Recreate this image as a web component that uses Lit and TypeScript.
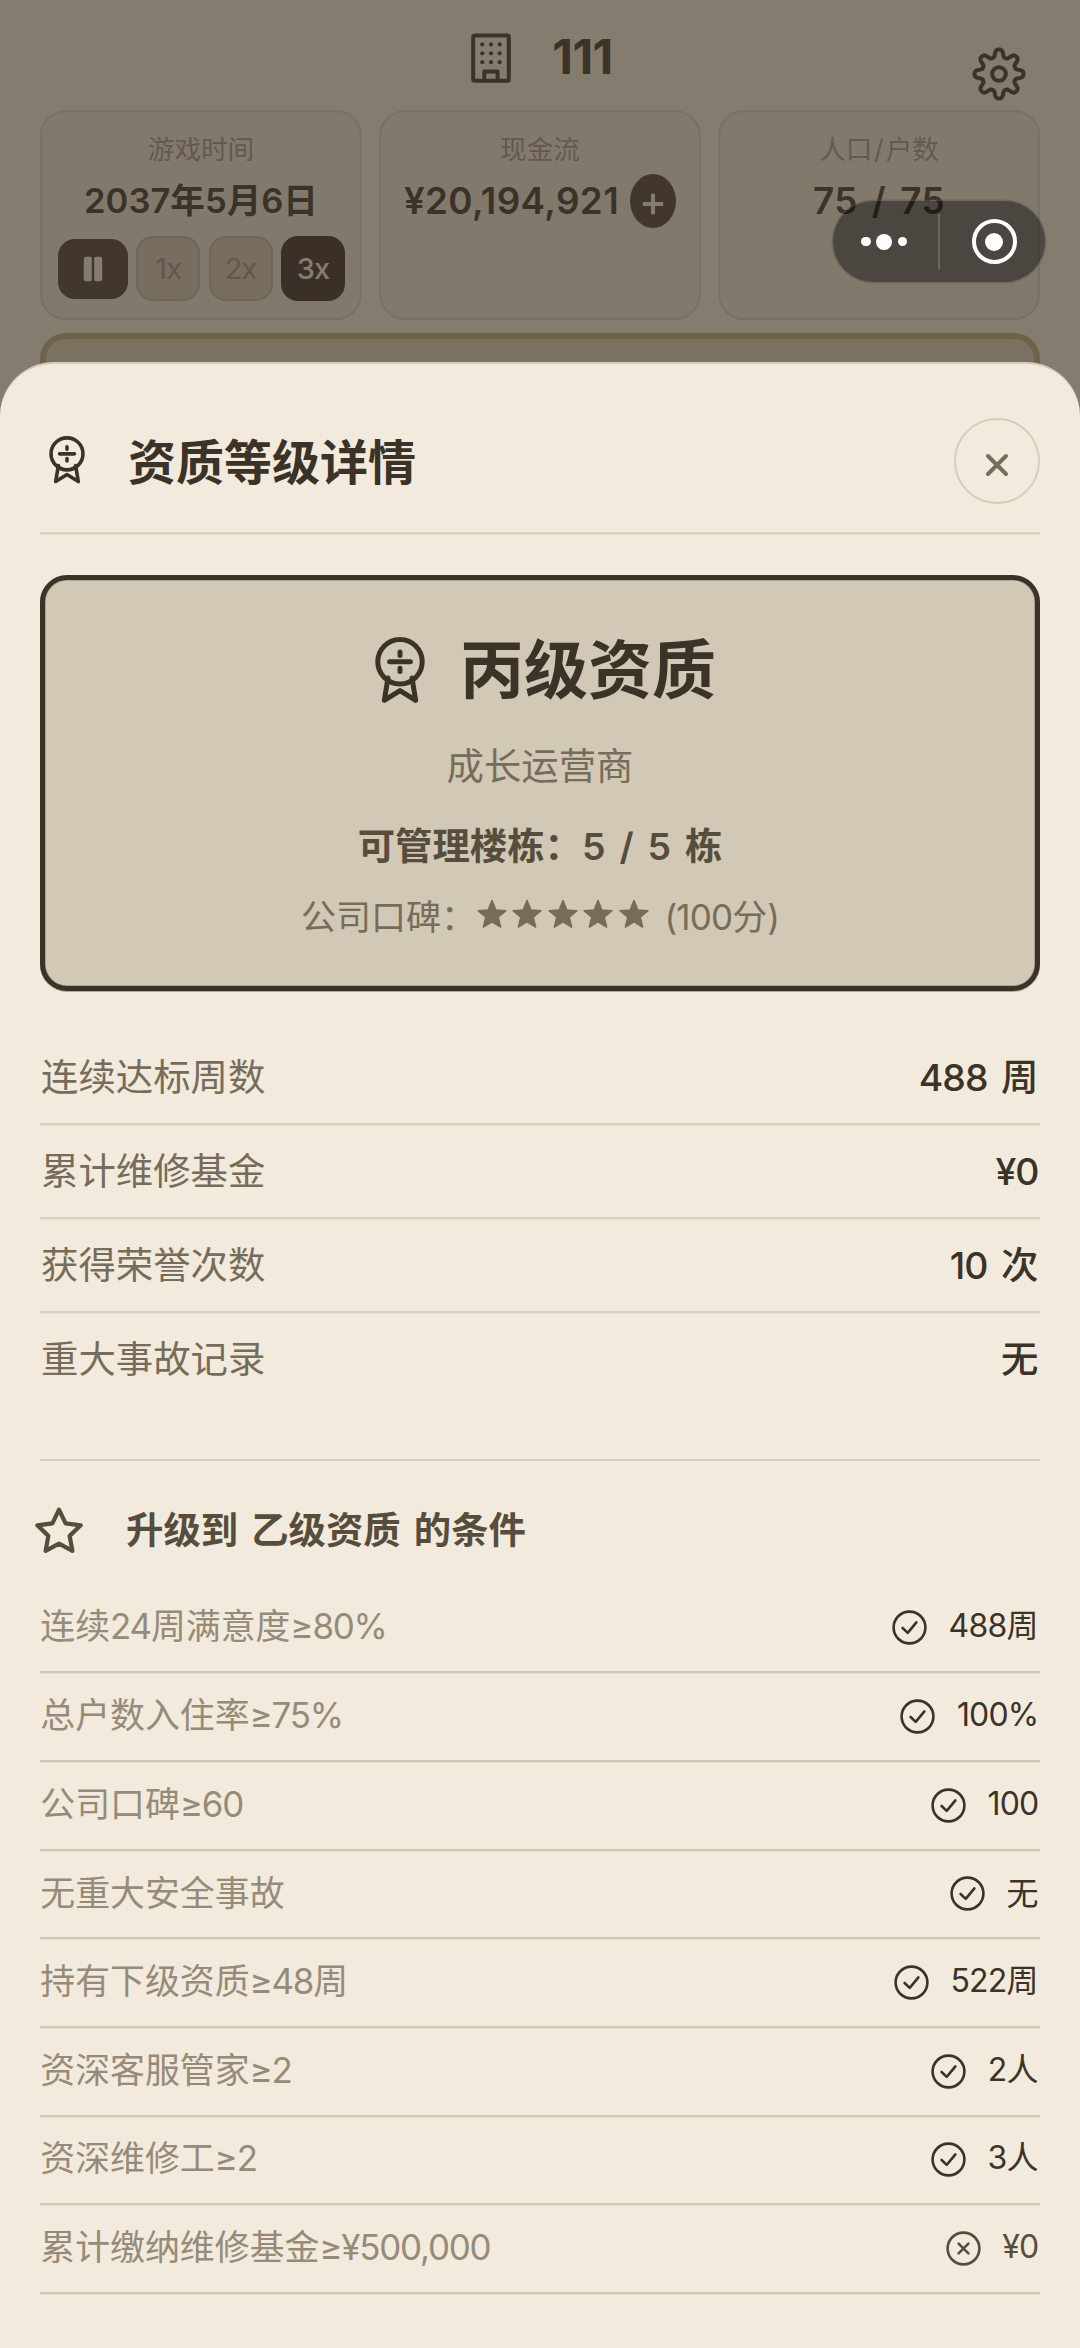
import { LitElement, html, svg, css } from "lit";
import { customElement, property } from "lit/decorators.js";

/** Splits a string into CJK and Latin runs so that each gets its own face. */
const mixed = (text: string) =>
  text
    .split(/([\x20-\x7e\u00a5\u2265]+)/)
    .filter((run) => run !== "")
    .map((run) => (/^[\x20-\x7e\u00a5\u2265]/.test(run) ? html`<span class="lat">${run}</span>` : run));

const starPoints = (cx: number, cy: number, outer: number, inner: number) =>
  Array.from({ length: 10 }, (_, i) => {
    const r = i % 2 ? inner : outer;
    const a = (i * Math.PI) / 5 - Math.PI / 2;
    return `${(cx + r * Math.cos(a)).toFixed(2)},${(cy + r * Math.sin(a)).toFixed(2)}`;
  }).join(" ");

const gearPoints = (c: number, mid: number, amp: number) =>
  Array.from({ length: 192 }, (_, i) => {
    const a = (i / 192) * Math.PI * 2;
    const r = mid + (amp * Math.tanh(1.5 * Math.cos(8 * a))) / Math.tanh(1.5);
    return `${(c + r * Math.cos(a)).toFixed(2)},${(c + r * Math.sin(a)).toFixed(2)}`;
  }).join(" ");

const ICONS = {
  medal: {
    box: "0 0 50 66",
    body: svg`<g fill="none" stroke="currentColor" stroke-width="5" stroke-linecap="round" stroke-linejoin="round">
      <circle cx="25" cy="24.8" r="22.2"/>
      <path d="M14.6 24.8H35.4"/>
      <path d="M13 41L9.3 63.3L25 53.6L40.7 63.3L37 41"/>
      <path d="M25 15V18.4M25 31.2V34.6"/></g>`,
  },
  building: {
    box: "0 0 40 50",
    body: svg`<g fill="none" stroke="currentColor" stroke-width="4" stroke-linejoin="round">
      <rect x="2.2" y="2.4" width="35.6" height="45.4" rx="1.6"/>
      <path d="M13.3 47V38.4H26.6V47"/></g>
      <g fill="currentColor">${[11.3, 20, 28.7].map((x) =>
        [11.4, 20.3, 29.2].map((y) => svg`<circle cx=${x} cy=${y} r="2.1"/>`)
      )}</g>`,
  },
  gear: {
    box: "0 0 54 54",
    body: svg`<g fill="none" stroke="currentColor" stroke-width="4" stroke-linejoin="round">
      <polygon points=${gearPoints(27, 20.8, 3.7)}/>
      <circle cx="27" cy="27" r="6.8"/></g>`,
  },
  plus: {
    box: "0 0 22 22",
    body: svg`<path d="M11 .8V21.2M.8 11H21.2" stroke="currentColor" stroke-width="4"/>`,
  },
  pause: {
    box: "0 0 20 26",
    body: svg`<g fill="currentColor"><rect x=".8" y=".8" width="8" height="24.4" rx="2"/><rect x="11.2" y=".8" width="8" height="24.4" rx="2"/></g>`,
  },
  close: {
    box: "0 0 24 24",
    body: svg`<path d="M3 3L21 21M21 3L3 21" stroke="currentColor" stroke-width="4" stroke-linecap="round"/>`,
  },
  star: {
    box: "0 0 50 50",
    body: svg`<polygon points=${starPoints(25, 26.4, 22.8, 11.2)} fill="none" stroke="currentColor" stroke-width="4.2" stroke-linejoin="round"/>`,
  },
  rate: {
    box: "0 0 30 30",
    body: svg`<polygon points=${starPoints(15, 16.2, 14.6, 6.5)} fill="currentColor" stroke="currentColor" stroke-width="1.6" stroke-linejoin="round"/>`,
  },
  check: {
    box: "0 0 35 35",
    body: svg`<g fill="none" stroke="currentColor" stroke-width="2.6" stroke-linecap="round" stroke-linejoin="round">
      <circle cx="17.5" cy="17.5" r="15.9"/><path d="M10.6 18L15.7 22.9L24.4 12.4"/></g>`,
  },
  cross: {
    box: "0 0 35 35",
    body: svg`<g fill="none" stroke="currentColor" stroke-width="2.6" stroke-linecap="round">
      <circle cx="17.5" cy="17.5" r="15.9"/><path d="M12.6 12.6L22.4 22.4M22.4 12.6L12.6 22.4"/></g>`,
  },
};

type IconName = keyof typeof ICONS;

@customElement("ui-icon")
class UiIcon extends LitElement {
  @property() name: IconName = "star";

  static styles = css`
    :host {
      display: block;
      flex: none;
    }
    svg {
      display: block;
      width: 100%;
      height: 100%;
    }
  `;

  render() {
    const icon = ICONS[this.name];
    return html`<svg viewBox=${icon.box}>${icon.body}</svg>`;
  }
}

const STATS = [
  ["连续达标周数", "488 周"],
  ["累计维修基金", "¥0"],
  ["获得荣誉次数", "10 次"],
  ["重大事故记录", "无"],
];

const CONDITIONS: { label: string; value: string; met: boolean }[] = [
  { label: "连续24周满意度≥80%", value: "488周", met: true },
  { label: "总户数入住率≥75%", value: "100%", met: true },
  { label: "公司口碑≥60", value: "100", met: true },
  { label: "无重大安全事故", value: "无", met: true },
  { label: "持有下级资质≥48周", value: "522周", met: true },
  { label: "资深客服管家≥2", value: "2人", met: true },
  { label: "资深维修工≥2", value: "3人", met: true },
  { label: "累计缴纳维修基金≥¥500,000", value: "¥0", met: false },
];

@customElement("app-root")
class AppRoot extends LitElement {
  static styles = css`
    :host {
      display: block;
      position: relative;
      box-sizing: border-box;
      width: 1080px;
      height: 2348px;
      overflow: hidden;
      background: #857c70;
      color: #3b3228;
      font-family: "Noto Sans CJK SC", sans-serif;
      white-space: nowrap;
    }
    * {
      box-sizing: border-box;
    }
    .lat {
      font-family: Inter, "Noto Sans CJK SC", sans-serif;
      letter-spacing: -0.025em;
      word-spacing: 0.12em;
      white-space: pre;
    }

    /* dimmed game screen */
    .game {
      display: flex;
      flex-direction: column;
      padding: 0 40px;
    }
    .topbar {
      display: grid;
      grid-template-columns: 1fr auto 1fr;
      align-items: center;
      height: 110px;
    }
    .brand {
      grid-column: 2;
      display: flex;
      align-items: center;
      gap: 41px;
      height: 118px;
      margin: -1px 0 0 4px;
      font-size: 48px;
      font-weight: 700;
    }
    .brand .lat {
      letter-spacing: -0.01em;
      margin-top: -3px;
    }
    .brand ui-icon {
      width: 40px;
      height: 50px;
    }
    .topbar .settings {
      justify-self: end;
      width: 54px;
      height: 54px;
      margin: 40px 14px 0 0;
      translate: 0 -5px;
    }
    .tiles {
      display: grid;
      grid-template-columns: repeat(3, 1fr);
      gap: 17px;
      height: 210px;
    }
    .tile {
      display: flex;
      flex-direction: column;
      align-items: center;
      padding: 18px 0 0;
      border: 2px solid #7a7164;
      border-radius: 26px;
      background: #82796d;
    }
    .tile-label {
      height: 36px;
      line-height: 36px;
      font-size: 26.6px;
      color: #635a4d;
    }
    .tile-label .lat {
      letter-spacing: 0.08em;
      margin-left: 0.06em;
    }
    .tile-value {
      display: flex;
      align-items: center;
      justify-content: center;
      height: 54px;
      margin-top: 8px;
      gap: 11px;
      font-size: 36.8px;
      line-height: 54px;
      font-weight: 600;
    }
    .tile-value .lat {
      letter-spacing: 0.01em;
      word-spacing: 0.12em;
    }
    .tile-value.date {
      font-size: 34.6px;
      margin-top: 6px;
    }
    .tile-value.date .lat {
      letter-spacing: 0;
    }
    .add {
      display: flex;
      align-items: center;
      justify-content: center;
      width: 46px;
      height: 54px;
      padding-top: 5px;
      border-radius: 50%;
      background: #41372a;
      color: #857c70;
    }
    .add ui-icon {
      width: 22px;
      height: 22px;
    }
    .speeds {
      display: flex;
      align-items: center;
      gap: 8.4px;
      margin: 10px 0 0 1px;
    }
    .speed {
      display: flex;
      align-items: center;
      justify-content: center;
      width: 64px;
      height: 65px;
      border: 2px solid #6f6658;
      border-radius: 17px;
      background: #776e60;
      color: #61584a;
      font-size: 29px;
    }
    .speed.pause {
      width: 70px;
      height: 60px;
      border-color: #41372a;
      background: #41372a;
      color: #857c70;
    }
    .speed.pause ui-icon {
      width: 20px;
      height: 26px;
    }
    .speed.on {
      border-color: #3a3027;
      background: #3a3027;
      color: #857c70;
      font-weight: 500;
    }
    .notice {
      height: 90px;
      margin-top: 12.5px;
      border: 6px solid #706149;
      border-radius: 26px;
      background: #7a7161;
    }

    /* host-app capsule floating over the page */
    .capsule {
      position: absolute;
      left: 833px;
      top: 201px;
      display: grid;
      grid-template-columns: 105px 2px 1fr;
      align-items: center;
      justify-items: center;
      width: 212px;
      height: 81px;
      border-radius: 41px;
      background: rgba(0, 0, 0, 0.42);
      box-shadow: 0 0 0 1.5px rgba(90, 82, 76, 0.45);
    }
    .dots {
      display: flex;
      align-items: center;
      gap: 5.5px;
      margin-right: 3px;
    }
    .dot {
      width: 9.4px;
      height: 9.4px;
      border-radius: 50%;
      background: #fff;
    }
    .dot.big {
      width: 16px;
      height: 16px;
    }
    .sep {
      width: 2px;
      height: 55px;
      background: #6d6761;
    }
    .ring {
      display: flex;
      align-items: center;
      justify-content: center;
      width: 45px;
      height: 45px;
      margin-left: 3px;
      border: 4.5px solid #fff;
      border-radius: 50%;
    }
    .ring .dot {
      width: 18px;
      height: 18px;
    }

    /* bottom sheet */
    .sheet {
      position: absolute;
      inset: 362px 0 0;
      display: flex;
      flex-direction: column;
      padding: 0 40px;
      border-top: 2px solid #d3cab8;
      border-radius: 54px 54px 0 0;
      background: #f2eadc;
    }
    .sheet-head {
      display: flex;
      align-items: center;
      height: 170px;
      padding-top: 26px;
      border-bottom: 2px solid #d9d1bf;
      box-shadow: 0 1px 0 #e4dccc;
    }
    .sheet-head ui-icon.medal {
      width: 36px;
      height: 47.5px;
      margin: -1px 0 0 9px;
    }
    .sheet-title {
      flex: 1;
      height: 60px;
      margin: -3px 0 0 43px;
      line-height: 60px;
      font-size: 48px;
      font-weight: 600;
    }
    .close {
      display: flex;
      align-items: center;
      justify-content: center;
      width: 86px;
      height: 86px;
      padding-top: 8px;
      border: 2px solid #d6cdbb;
      border-radius: 50%;
      color: #776c5a;
    }
    .sheet-head ui-icon.medal,
    .sheet-title,
    .close {
      margin-bottom: 1px;
    }
    .close ui-icon {
      width: 24px;
      height: 24px;
    }
    .grade {
      display: flex;
      flex-direction: column;
      align-items: center;
      height: 416px;
      margin-top: 41px;
      padding-top: 44px;
      border: 5px solid #3b3228;
      border-radius: 27px;
      background: #d1c8b6;
      box-shadow: inset 0 0 0 0.6px #8d8374, 0 1px 0 #b0a796;
      color: #776c5a;
    }
    .grade-name {
      display: flex;
      align-items: center;
      gap: 35px;
      height: 90px;
      margin-left: 11px;
      line-height: 90px;
      color: #3b3228;
      font-size: 64px;
      font-weight: 600;
    }
    .grade-name span {
      margin-top: -8px;
    }
    .grade-name ui-icon {
      width: 50px;
      height: 66px;
      margin-top: 2px;
    }
    .grade-role {
      height: 56px;
      margin-top: 22px;
      line-height: 56px;
      font-size: 37.4px;
    }
    .grade-cap {
      height: 56px;
      margin-top: 24px;
      line-height: 56px;
      font-size: 37.4px;
      font-weight: 600;
      color: #574d3c;
    }
    .grade-cap .lat {
      word-spacing: 0.17em;
    }
    .grade-fame {
      display: flex;
      height: 56px;
      margin-top: 15px;
      line-height: 56px;
      font-size: 35px;
    }
    .grade-fame .lat {
      word-spacing: 0;
    }
    .stars {
      display: flex;
      gap: 5.4px;
      margin: 12px 7px 0 1px;
    }
    .stars ui-icon {
      width: 30px;
      height: 30px;
    }
    .stats {
      display: flex;
      flex-direction: column;
      margin-top: 40px;
    }
    .stat {
      display: flex;
      justify-content: space-between;
      height: 94px;
      padding: 0 1.5px 0 1px;
      border-bottom: 2px solid #d9d1bf;
      box-shadow: 0 1px 0 #e6decf;
      line-height: 89px;
      font-size: 37.4px;
      color: #776c5a;
    }
    .stat:last-child {
      border-bottom-color: transparent;
      box-shadow: none;
    }
    .stat-value {
      color: #3b3228;
      font-weight: 500;
    }
    .upgrade {
      display: flex;
      flex-direction: column;
      margin-top: 52px;
      border-top: 2px solid #d9d1bf;
    }
    .upgrade-head {
      display: flex;
      align-items: center;
      height: 123.6px;
      color: #574d3c;
      font-size: 37.4px;
      font-weight: 600;
    }
    .upgrade-head ui-icon {
      width: 50px;
      height: 50px;
      margin: 17px 42px 0 -6px;
    }
    .upgrade-title {
      height: 56px;
      margin-top: 10px;
      line-height: 56px;
    }
    .cond {
      display: flex;
      align-items: center;
      height: 88.66px;
      padding: 0 1.5px 0 0.3px;
      border-bottom: 2px solid #cfc6b5;
      box-shadow: 0 1px 0 #e4dccc;
      font-size: 34.9px;
      color: #968b78;
    }
    .cond-label {
      flex: 1;
      line-height: 56px;
      margin-top: -5px;
    }
    .cond-label .lat {
      letter-spacing: -0.035em;
    }
    .cond ui-icon {
      width: 35px;
      height: 35px;
      margin-right: 21.5px;
    }
    .met {
      color: #3b3228;
    }
    .unmet {
      color: #574d3c;
    }
    .cond-value {
      font-size: 32px;
      line-height: 56px;
      margin-top: -6px;
    }
  `;

  render() {
    return html`
      <div class="game">
        <div class="topbar">
          <div class="brand"><ui-icon name="building"></ui-icon><span class="lat">111</span></div>
          <ui-icon class="settings" name="gear"></ui-icon>
        </div>
        <div class="tiles">
          <div class="tile">
            <div class="tile-label">游戏时间</div>
            <div class="tile-value date"><span>${mixed("2037年5月6日")}</span></div>
            <div class="speeds">
              <div class="speed pause"><ui-icon name="pause"></ui-icon></div>
              <div class="speed"><span class="lat">1x</span></div>
              <div class="speed"><span class="lat">2x</span></div>
              <div class="speed on"><span class="lat">3x</span></div>
            </div>
          </div>
          <div class="tile">
            <div class="tile-label">现金流</div>
            <div class="tile-value">
              <span class="lat">¥20,194,921</span><div class="add"><ui-icon name="plus"></ui-icon></div>
            </div>
          </div>
          <div class="tile">
            <div class="tile-label">${mixed("人口/户数")}</div>
            <div class="tile-value"><span class="lat">75 / 75</span></div>
          </div>
        </div>
        <div class="notice"></div>
      </div>

      <div class="sheet">
        <div class="sheet-head">
          <ui-icon class="medal" name="medal"></ui-icon>
          <div class="sheet-title">资质等级详情</div>
          <div class="close"><ui-icon name="close"></ui-icon></div>
        </div>
        <div class="grade">
          <div class="grade-name"><ui-icon name="medal"></ui-icon><span>丙级资质</span></div>
          <div class="grade-role">成长运营商</div>
          <div class="grade-cap">${mixed("可管理楼栋：5 / 5 栋")}</div>
          <div class="grade-fame">
            <span>公司口碑：</span>
            <div class="stars">${[1, 2, 3, 4, 5].map(() => html`<ui-icon name="rate"></ui-icon>`)}</div>
            <span>${mixed(" (100分)")}</span>
          </div>
        </div>
        <div class="stats">
          ${STATS.map(
            ([label, value]) =>
              html`<div class="stat"><span>${label}</span><span class="stat-value">${mixed(value)}</span></div>`
          )}
        </div>
        <div class="upgrade">
          <div class="upgrade-head">
            <ui-icon name="star"></ui-icon>
            <div class="upgrade-title">${mixed("升级到 乙级资质 的条件")}</div>
          </div>
          ${CONDITIONS.map(
            (c) => html`<div class="cond">
              <span class="cond-label">${mixed(c.label)}</span><ui-icon
                class=${c.met ? "met" : "unmet"}
                name=${c.met ? "check" : "cross"}
              ></ui-icon><span class="cond-value ${c.met ? "met" : "unmet"}">${mixed(c.value)}</span>
            </div>`
          )}
        </div>
      </div>

      <div class="capsule">
        <div class="dots"><div class="dot"></div><div class="dot big"></div><div class="dot"></div></div>
        <div class="sep"></div>
        <div class="ring"><div class="dot"></div></div>
      </div>
    `;
  }
}
